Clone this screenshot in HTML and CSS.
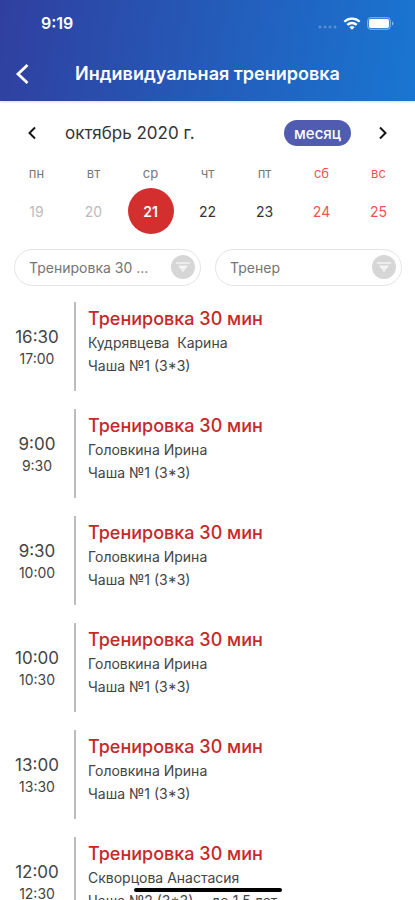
FILE: index.html
```html
<!DOCTYPE html>
<html lang="ru">
<head>
<meta charset="utf-8">
<meta name="viewport" content="width=device-width, initial-scale=1">
<title>Индивидуальная тренировка</title>
<link rel="stylesheet" href="styles.css">
</head>
<body>
<div class="app">
  <header class="header">
    <div class="status">
      <span class="clock">9:19</span>
      <span class="indicators">
        <svg width="19" height="11" viewBox="0 0 19 11" fill="#fff" opacity=".25"><circle cx="2" cy="9" r="1.5"/><circle cx="7" cy="9" r="1.5"/><circle cx="12" cy="9" r="1.5"/><circle cx="17" cy="9" r="1.5"/></svg>
        <svg width="18" height="13" viewBox="0 0 18 13" fill="none" stroke="#fff" stroke-width="2.3"><path d="M1.3 4.8a11 11 0 0 1 15.4 0"/><path d="M4.3 7.9a6.8 6.8 0 0 1 9.4 0"/><path d="M9 12.8 6.4 10.2a3.8 3.8 0 0 1 5.2 0z" fill="#fff" stroke="none"/></svg>
        <svg width="27" height="13" viewBox="0 0 27 13"><rect x=".5" y=".5" width="23" height="12" rx="3.5" fill="#fff" fill-opacity=".15" stroke="#fff" stroke-opacity=".35"/><rect x="2" y="2" width="20" height="9" rx="2" fill="#fff"/><path d="M25 4.5v4q1.5-.6 1.5-2t-1.5-2z" fill="#fff" fill-opacity=".5"/></svg>
      </span>
    </div>
    <div class="navbar">
      <button class="back" type="button" aria-label="Назад"><svg width="16" height="22" viewBox="0 0 16 22" fill="none" stroke="#fff" stroke-width="2.8"><path d="M13.5 2 4 11l9.500 9"/></svg></button>
      <h1>Индивидуальная тренировка</h1>
    </div>
  </header>

  <section class="calendar">
    <div class="month">
      <button class="arrow" type="button" aria-label="Предыдущая неделя"><svg width="10" height="14" viewBox="0 0 10 14" fill="none" stroke="#151515" stroke-width="2"><path d="M8 1.500 2.500 7 8 12.500"/></svg></button>
      <h2>октябрь 2020 г.</h2>
      <button class="mode" type="button">месяц</button>
      <button class="arrow" type="button" aria-label="Следующая неделя"><svg width="10" height="14" viewBox="0 0 10 14" fill="none" stroke="#151515" stroke-width="2"><path d="M2 1.500 7.500 7 2 12.500"/></svg></button>
    </div>
    <table class="week">
      <thead><tr><th>пн</th><th>вт</th><th>ср</th><th>чт</th><th>пт</th><th class="weekend">сб</th><th class="weekend">вс</th></tr></thead>
      <tbody><tr>
        <td><button class="day past" type="button">19</button></td>
        <td><button class="day past" type="button">20</button></td>
        <td><button class="day selected" type="button">21</button></td>
        <td><button class="day" type="button">22</button></td>
        <td><button class="day" type="button">23</button></td>
        <td><button class="day weekend" type="button">24</button></td>
        <td><button class="day weekend" type="button">25</button></td>
      </tr></tbody>
    </table>
  </section>

  <div class="filters">
    <div class="filter">
      <select aria-label="Услуга"><option>Тренировка 30 ...</option></select>
      <svg class="funnel" width="24" height="24" viewBox="0 0 24 24"><circle cx="12" cy="12" r="12" fill="#d6d6d6"/><path d="M5 8h14" stroke="#f2f2f2" stroke-width="1.5"/><path d="M7 10.500h10L12 17.500z" fill="#f2f2f2" fill-opacity=".8"/><path d="M8.500 12h7" stroke="#fff" stroke-width="1"/></svg>
    </div>
    <div class="filter">
      <select aria-label="Тренер"><option>Тренер</option></select>
      <svg class="funnel" width="24" height="24" viewBox="0 0 24 24"><circle cx="12" cy="12" r="12" fill="#d6d6d6"/><path d="M5 8h14" stroke="#f2f2f2" stroke-width="1.5"/><path d="M7 10.500h10L12 17.500z" fill="#f2f2f2" fill-opacity=".8"/><path d="M8.500 12h7" stroke="#fff" stroke-width="1"/></svg>
    </div>
  </div>

  <ul class="sessions">
    <li class="session"><div class="time"><span class="start">16:30</span><span class="end">17:00</span></div><div class="info"><h3>Тренировка 30 мин</h3><p>Кудрявцева&nbsp; Карина</p><p>Чаша №1 (3*3)</p></div></li>
    <li class="session"><div class="time"><span class="start">9:00</span><span class="end">9:30</span></div><div class="info"><h3>Тренировка 30 мин</h3><p>Головкина Ирина</p><p>Чаша №1 (3*3)</p></div></li>
    <li class="session"><div class="time"><span class="start">9:30</span><span class="end">10:00</span></div><div class="info"><h3>Тренировка 30 мин</h3><p>Головкина Ирина</p><p>Чаша №1 (3*3)</p></div></li>
    <li class="session"><div class="time"><span class="start">10:00</span><span class="end">10:30</span></div><div class="info"><h3>Тренировка 30 мин</h3><p>Головкина Ирина</p><p>Чаша №1 (3*3)</p></div></li>
    <li class="session"><div class="time"><span class="start">13:00</span><span class="end">13:30</span></div><div class="info"><h3>Тренировка 30 мин</h3><p>Головкина Ирина</p><p>Чаша №1 (3*3)</p></div></li>
    <li class="session"><div class="time"><span class="start">12:00</span><span class="end">12:30</span></div><div class="info"><h3>Тренировка 30 мин</h3><p>Скворцова Анастасия</p><p>Чаша №2 (3*3)&nbsp; - до 1,5 лет</p></div></li>
  </ul>
  <div class="home-indicator"></div>
</div>
</body>
</html>
```
FILE: styles.css
```css
* { box-sizing: border-box; }
body {
  margin: 0;
  background: #fff;
  color: #444;
  font-family: Inter, "Liberation Sans", sans-serif;
}
h1, h2, h3, p, ul { margin: 0; padding: 0; }
svg { display: block; }
button, select { font: inherit; color: inherit; }
button { border: 0; padding: 0; background: none; cursor: pointer; }

.app {
  display: flex;
  flex-direction: column;
  height: 100vh;
  overflow: hidden;
}
.header {
  flex: none;
  background: linear-gradient(100deg, #303f9f, #1976d2);
  color: #fff;
  box-shadow: 0 1px 2px rgba(0, 0, 0, .15);
}
.status {
  display: flex;
  align-items: center;
  justify-content: space-between;
  height: 46px;
  padding: 0 21px 0 41px;
}
.clock { font-size: 16px; font-weight: 600; }
.indicators { display: flex; align-items: center; gap: 6px; }
.navbar {
  display: grid;
  grid-template-columns: 32px 1fr 32px;
  align-items: center;
  height: 55px;
  padding: 0 14px;
}
.back { display: flex; align-items: center; height: 32px; }
h1 { text-align: center; font-size: 18px; line-height: 24px; font-weight: 600; white-space: nowrap; }

.calendar { flex: none; padding: 16px 8px 0; }
.month { display: flex; align-items: center; height: 32px; padding: 0 11px; }
.arrow { display: flex; align-items: center; justify-content: center; width: 26px; height: 32px; }
h2 { flex: 1; padding-left: 20px; color: #333; font-size: 17px; font-weight: 400; }
.mode {
  height: 26px;
  padding: 0 10px;
  margin-right: 19px;
  border-radius: 13px;
  background: #515cb1;
  color: #fff;
  font-size: 15px;
  font-weight: 500;
}
.week { width: 100%; table-layout: fixed; border-collapse: collapse; text-align: center; }
.week th { height: 39px; padding: 8px 0 0; color: #777; font-size: 13px; line-height: 16px; font-weight: 400; }
.week td { padding: 0; }
.day { width: 46px; height: 46px; border-radius: 50%; color: #333; font-size: 14px; }
.day.past { color: #bbb; }
.day.selected { background: #d32f2f; color: #fff; font-weight: 600; }
.week .weekend { color: #ef5350; }

.filters { flex: none; display: grid; grid-template-columns: 1fr 1fr; gap: 14px; padding: 15px 13px 0 14px; }
.filter { position: relative; }
.filter select {
  display: block;
  width: 100%;
  height: 37px;
  padding: 0 36px 0 14px;
  border: 1px solid #e4e4e4;
  border-radius: 19px;
  appearance: none;
  background: #fff;
  color: #757575;
  font-size: 14px;
}
.funnel { position: absolute; top: 6px; right: 6px; pointer-events: none; }

.sessions { flex: 1; min-height: 0; overflow: hidden; list-style: none; padding-top: 16px; }
.session { display: grid; grid-template-columns: 74px 1fr; height: 89px; margin-bottom: 18px; }
.time { display: flex; flex-direction: column; align-items: center; justify-content: center; color: #444; }
.start { font-size: 17px; line-height: 24px; }
.end { font-size: 14px; line-height: 20px; }
.info { border-left: 2px solid #bdbdbd; padding: 4px 0 0 12px; }
h3 { color: #c62828; font-size: 18px; line-height: 25px; font-weight: 500; }
.info p { font-size: 14px; line-height: 23px; }

.home-indicator {
  position: fixed;
  bottom: 8px;
  left: 50%;
  width: 148px;
  height: 4px;
  margin-left: -74px;
  border-radius: 2px;
  background: #000;
}
```
